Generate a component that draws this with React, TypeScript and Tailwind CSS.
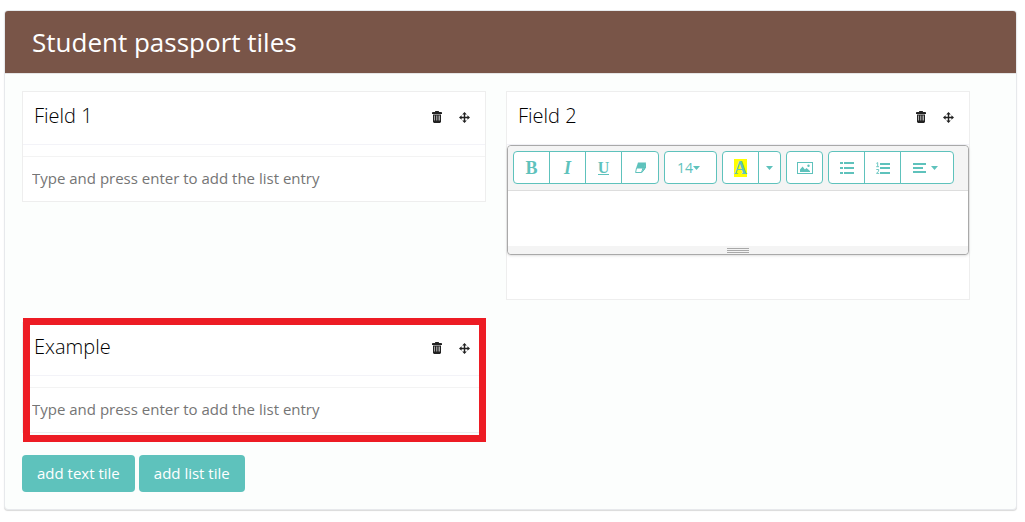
import React from "react";

function TrashIcon() {
  return (
    <svg width="10" height="12" viewBox="0 0 10 12" fill="currentColor" aria-hidden="true">
      <path d="M3 1V.5L3.5 0h3l.5.5V1h2.5l.5.7V3H0V1.7L.5 1z" />
      <path
        fillRule="evenodd"
        d="M1 3.5h8V11l-1 1H2l-1-1zM2.3 4.5v5h.6v-5zM4.2 4.5v5h.5v-5zM5.8 4.5v5h.5v-5zM7.4 4.5v5H8v-5z"
      />
    </svg>
  );
}

function MoveIcon() {
  return (
    <svg width="11" height="11" viewBox="0 0 11 11" fill="currentColor" aria-hidden="true">
      <path d="M5.5 0 7.8 2.6H6.2v2.2h2.2V3.2L11 5.5 8.4 7.8V6.2H6.2v2.2h1.6L5.5 11 3.2 8.4h1.6V6.2H2.6v1.6L0 5.5l2.6-2.3v1.6h2.2V2.6H3.2z" />
    </svg>
  );
}

function EraserIcon() {
  return (
    <svg width="11" height="12" viewBox="0 0 11 12" aria-hidden="true">
      <path d="M3 .5h8L8.8 6.5H1z" fill="currentColor" />
      <path d="M1.5 6 .6 10.5h5.9L8 6M6.5 10.5 9.6 7l1-5.5" fill="none" stroke="currentColor" />
      <path d="M8.6 6 11 .5v5L7 11z" fill="currentColor" />
    </svg>
  );
}

function PictureIcon() {
  return (
    <svg width="16" height="12" viewBox="0 0 16 12" aria-hidden="true">
      <rect x=".5" y=".5" width="15" height="11" fill="none" stroke="currentColor" />
      <path d="M3 10V7.6l2.6-3 2.3 2.8 1.6-1.3L13 9v1z" fill="currentColor" />
      <circle cx="11.5" cy="3.7" r="1.2" fill="currentColor" />
    </svg>
  );
}

function BulletListIcon() {
  return (
    <svg width="14" height="12" viewBox="0 0 14 12" fill="currentColor" aria-hidden="true">
      <path d="M0 0h3v2H0zM4 0h10v2H4zM0 5h3v2H0zM4 5h10v2H4zM0 10h3v2H0zM4 10h10v2H4z" />
    </svg>
  );
}

function NumberListIcon() {
  return (
    <svg width="14" height="12" viewBox="0 0 14 12" fill="currentColor" aria-hidden="true">
      <path d="M4 1h10v2H4zM4 5h10v2H4zM4 10h10v2H4z" />
      <path d="M.4 1.4 1.7.6v3.9M.2 4.7h2.8M.3 7.5h2.3v1.6L.5 11.4h2.7" fill="none" stroke="currentColor" strokeWidth=".9" />
    </svg>
  );
}

function AlignIcon() {
  return (
    <svg width="13" height="10" viewBox="0 0 13 10" fill="currentColor" aria-hidden="true">
      <path d="M0 0h13v2H0zM0 4h10v2H0zM0 8h13v2H0z" />
    </svg>
  );
}

function Caret() {
  return (
    <svg width="7" height="4" viewBox="0 0 7 4" fill="currentColor" aria-hidden="true">
      <path d="M0 0h7L3.5 4z" />
    </svg>
  );
}

function ToolButton({ label, width = "w-[37px]", children }: { label: string; width?: string; children: React.ReactNode }) {
  return (
    <button
      type="button"
      aria-label={label}
      className={`${width} -ml-px flex h-[33px] shrink-0 items-center justify-center border border-[#5ec2bc] bg-white text-[#5ec2bc] first:ml-0 first:rounded-l last:rounded-r`}
    >
      {children}
    </button>
  );
}

function Editor() {
  return (
    <div className="rounded border border-[#a9a9a9] bg-white shadow-sm">
      <div className="flex gap-[5px] rounded-t border-b border-[#ddd] bg-[#f4f4f4] p-[5px] pb-1.5" role="toolbar" aria-label="Formatting">
        <div className="flex font-['Liberation_Serif',serif] text-lg leading-none">
          <ToolButton label="Bold">
            <span className="font-bold">B</span>
          </ToolButton>
          <ToolButton label="Italic">
            <span className="font-bold italic">I</span>
          </ToolButton>
          <ToolButton label="Underline">
            <span className="border-b border-[#5ec2bc] text-base leading-[13px] font-bold">U</span>
          </ToolButton>
          <ToolButton label="Clear formatting" width="w-[38px]">
            <EraserIcon />
          </ToolButton>
        </div>
        <div className="flex">
          <ToolButton label="Font size 14" width="w-[53px]">
            <span className="flex items-center pr-1 text-sm">
              14
              <Caret />
            </span>
          </ToolButton>
        </div>
        <div className="flex">
          <ToolButton label="Highlight colour">
            <span className="bg-[#ff0] font-['Liberation_Serif',serif] text-lg leading-[18px] font-bold">A</span>
          </ToolButton>
          <ToolButton label="More colours" width="w-[23px]">
            <Caret />
          </ToolButton>
        </div>
        <div className="flex">
          <ToolButton label="Insert picture">
            <PictureIcon />
          </ToolButton>
        </div>
        <div className="flex">
          <ToolButton label="Bulleted list">
            <BulletListIcon />
          </ToolButton>
          <ToolButton label="Numbered list">
            <NumberListIcon />
          </ToolButton>
          <ToolButton label="Paragraph" width="w-[54px]">
            <span className="flex items-center gap-[5px] pr-1">
              <AlignIcon />
              <Caret />
            </span>
          </ToolButton>
        </div>
      </div>
      <textarea aria-label="Field 2 text" className="block h-[55px] w-full resize-none px-2.5 py-2 outline-none" />
      <div className="flex h-2 flex-col items-center justify-center gap-px rounded-b bg-[#f4f4f4]">
        <div className="h-px w-[22px] bg-[#a9a9a9]" />
        <div className="h-px w-[22px] bg-[#a9a9a9]" />
        <div className="h-px w-[22px] bg-[#a9a9a9]" />
      </div>
    </div>
  );
}

function TileHeader({ title }: { title: string }) {
  return (
    <div className="flex h-[52px] items-start justify-between pt-[9px] pr-[15px] pl-[11px] text-[#222]">
      <h2 className="text-xl leading-[30px] font-light text-black">{title}</h2>
      <div className="flex h-8 items-center gap-[17px]">
        <button type="button" aria-label={`Delete ${title}`}>
          <TrashIcon />
        </button>
        <button type="button" aria-label={`Move ${title}`}>
          <MoveIcon />
        </button>
      </div>
    </div>
  );
}

function ListTile({ title, highlighted = false }: { title: string; highlighted?: boolean }) {
  return (
    <section className="relative self-start border border-[#eee] bg-white">
      <TileHeader title={title} />
      <div className="h-3 border-t border-[#f3f3f8]" />
      <div className="border-t border-[#f3f3f3]">
        <input
          type="text"
          aria-label={`${title} list entry`}
          placeholder="Type and press enter to add the list entry"
          className="block h-11 w-full px-[9px] pb-0.5 text-[15px] outline-none placeholder:text-[#757575]"
        />
      </div>
      {highlighted && <div className="pointer-events-none absolute -top-[5px] right-[-1px] -bottom-[10px] left-0 border-[7px] border-[#ed1c24]" />}
    </section>
  );
}

function TextTile({ title }: { title: string }) {
  return (
    <section className="self-start border border-[#eee] bg-white pb-11">
      <TileHeader title={title} />
      <div className="border-t border-[#f3f3f8]">
        <Editor />
      </div>
    </section>
  );
}

export default function App() {
  return (
    <main className="bg-white pt-2.5 pr-2 pb-3 pl-1 font-['Open_Sans',sans-serif]">
      <div className="rounded border border-[#e7e9ec] bg-[#fcfefd] shadow-[0_1px_1px_rgba(0,0,0,0.15)]">
        <header className="rounded-t-[3px] border-b border-[#e5e5e5] bg-[#795548] px-[27px] py-[13px]">
          <h1 className="text-[26px] leading-9 text-white">Student passport tiles</h1>
        </header>
        <div className="pt-[17px] pr-[46px] pb-[17px] pl-[17px]">
          <div className="grid grid-cols-2 gap-x-5 gap-y-[22px]">
            <ListTile title="Field 1" />
            <TextTile title="Field 2" />
            <ListTile title="Example" highlighted />
          </div>
          <div className="mt-[22px] flex gap-1 text-[15px] leading-[21px] text-white">
            <button type="button" className="rounded bg-[#5ec2bc] px-[15px] py-2">
              add text tile
            </button>
            <button type="button" className="rounded bg-[#5ec2bc] px-[15px] py-2">
              add list tile
            </button>
          </div>
        </div>
      </div>
    </main>
  );
}
